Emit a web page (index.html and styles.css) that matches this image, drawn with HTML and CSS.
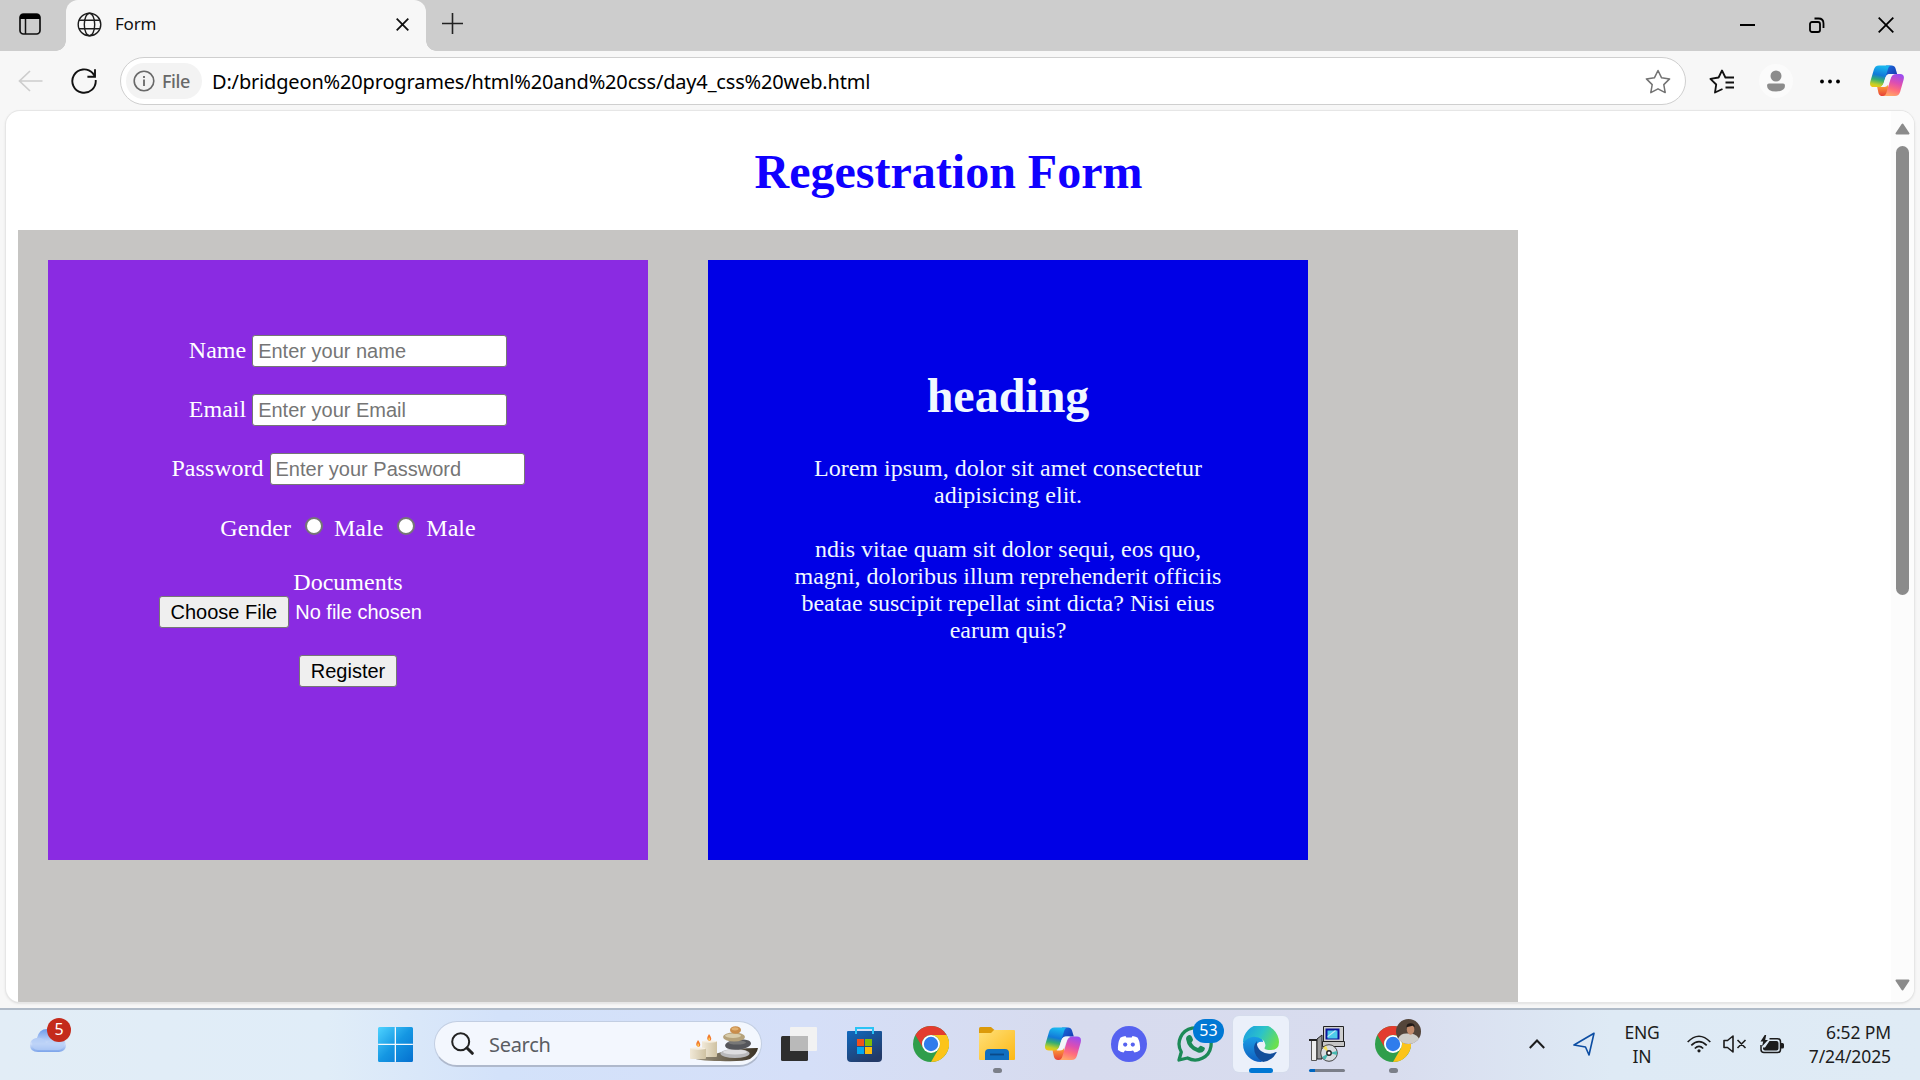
FILE: index.html
```html
<!DOCTYPE html>
<html lang="en">
<head>
<meta charset="utf-8">
<title>Form</title>
<link rel="stylesheet" href="styles.css">
</head>
<body>
<svg class="defs" width="0" height="0" aria-hidden="true">
  <defs>
    <linearGradient id="cpA" x1="0.3" y1="0" x2="0.1" y2="1"><stop offset="0" stop-color="#19b5ee"/><stop offset=".4" stop-color="#1279d8"/><stop offset=".62" stop-color="#35ad72"/><stop offset=".85" stop-color="#c3cf26"/><stop offset="1" stop-color="#f8c510"/></linearGradient>
    <linearGradient id="cpB" x1=".7" y1="0" x2=".4" y2="1"><stop offset="0" stop-color="#9b4df0"/><stop offset=".4" stop-color="#dd4eb2"/><stop offset=".7" stop-color="#ff6d7c"/><stop offset="1" stop-color="#ffa66a"/></linearGradient>
    <linearGradient id="cpC" x1="0" y1="0" x2="1" y2="1"><stop offset="0" stop-color="#1d6fe4"/><stop offset="1" stop-color="#1434a6"/></linearGradient>
    <linearGradient id="cpD" x1="0" y1="0" x2="0" y2="1"><stop offset="0" stop-color="#ffae35"/><stop offset="1" stop-color="#e8403a"/></linearGradient>
    <symbol id="copilot" viewBox="0 0 36 34">
      <path fill="url(#cpC)" d="M17 .5h6q3 0 4 3l1.800 6H22q-4 0-6 4z"/>
      <path fill="url(#cpD)" d="M19 33h-6q-3 0-4-3l-1.500-7H13q5 0 6-3z"/>
      <path fill="url(#cpA)" d="M9.500.5H23q-3 0-4 4l-4.500 14.500q-1.300 4.500-6 4.500H4q-5.200 0-3.700-6L4 5Q5.200.5 9.500.5z"/>
      <path fill="url(#cpB)" d="M26.500 33H13.500q3 0 4-4L22 14q1.300-4.500 6-4.500h4q5 0 3.700 6L32 28.500q-1.200 4.500-5.500 4.500z"/>
      <path fill="#f4f4fa" d="M20.500 9.500H25q-2.300 1-3.200 4l-2.300 6.500q-1.300 3.500-4.500 3.500h-3.500q2.300-1.500 3-4l2-6.500q1.200-3.500 4-3.500z"/>
    </symbol>
    <symbol id="chrome" viewBox="0 0 36 36">
      <circle cx="18" cy="18" r="18" fill="#2f9e4b"/>
      <path fill="#e33b2e" d="M2.400 9A18 18 0 0 1 33.600 9H18a9 9 0 0 0-7.800 13.500z"/>
      <path fill="#fcc419" d="M33.600 9A18 18 0 0 1 18 36l7.800-13.500A9 9 0 0 0 18 9z"/>
      <circle cx="18" cy="18" r="9" fill="#fff"/><circle cx="18" cy="18" r="7.200" fill="#2f7cec"/>
    </symbol>
    <linearGradient id="win" x1="0" y1="0" x2="1" y2="1"><stop offset="0" stop-color="#4ed3ff"/><stop offset=".5" stop-color="#1597e3"/><stop offset="1" stop-color="#0570cf"/></linearGradient>
    <linearGradient id="cloud" x1="0" y1="0" x2="0" y2="1"><stop offset="0" stop-color="#6d9bea"/><stop offset=".65" stop-color="#cfdffa"/><stop offset="1" stop-color="#7ba3ea"/></linearGradient>
    <linearGradient id="bag" x1="0" y1="0" x2=".6" y2="1"><stop offset="0" stop-color="#1069bf"/><stop offset="1" stop-color="#233a68"/></linearGradient>
    <linearGradient id="fold" x1="0" y1="0" x2="1" y2="1"><stop offset="0" stop-color="#ffe07a"/><stop offset="1" stop-color="#fdb813"/></linearGradient>
    <linearGradient id="edA" x1="0" y1=".2" x2="1" y2=".6"><stop offset="0" stop-color="#1b9de2"/><stop offset=".5" stop-color="#2cc3c8"/><stop offset="1" stop-color="#6be04e"/></linearGradient>
    <linearGradient id="edB" x1="0" y1="0" x2="0" y2="1"><stop offset="0" stop-color="#1b9fe6"/><stop offset="1" stop-color="#0f5fc0"/></linearGradient>
    <linearGradient id="wood" x1="0" y1="0" x2="1" y2="0"><stop offset="0" stop-color="#a79e88"/><stop offset="1" stop-color="#3a3123"/></linearGradient>
    <linearGradient id="wax" x1="0" y1="0" x2="1" y2="0"><stop offset="0" stop-color="#f1e9d8"/><stop offset="1" stop-color="#cfc2a2"/></linearGradient>
  </defs>
</svg>

<div class="window">
  <header class="tabstrip">
    <div class="tab-actions">
      <svg width="22" height="22" viewBox="0 0 22 22"><rect x="1" y="1" width="20" height="20" rx="3.5" fill="none" stroke="#111" stroke-width="1.7"/><path d="M1 6V4q0-3 3-3h14q3 0 3 3v2z"/><path d="M6.5 6v15" stroke="#111" stroke-width="1.5"/></svg>
    </div>
    <div class="tab">
      <svg width="25" height="25" viewBox="0 0 25 25" fill="none" stroke="#1c1c1c" stroke-width="1.4"><circle cx="12.5" cy="12.5" r="11.3"/><ellipse cx="12.5" cy="12.5" rx="5.2" ry="11.3"/><path d="M2 8.2h21M2 16.8h21"/></svg>
      <span class="tab-title">Form</span>
      <svg width="13" height="13" viewBox="0 0 13 13" stroke="#111" stroke-width="1.8"><path d="M.7.7l11.6 11.6M12.300.7L.7 12.300"/></svg>
    </div>
    <div class="new-tab"><svg width="21" height="21" viewBox="0 0 21 21" stroke="#222" stroke-width="1.6"><path d="M10.500 0v21M0 10.500h21"/></svg></div>
    <div class="caption">
      <span><svg width="15" height="16" viewBox="0 0 15 16"><path d="M0 8h15" stroke="#000" stroke-width="2"/></svg></span>
      <span><svg width="16" height="16" viewBox="0 0 16 16" fill="none" stroke="#000" stroke-width="1.800"><rect x="1" y="5" width="10" height="10" rx="2"/><path d="M5.500 1.500h4Q14.500 1.500 14.500 6.500v4.500"/></svg></span>
      <span><svg width="16" height="16" viewBox="0 0 16 16" stroke="#000" stroke-width="1.800"><path d="M.7.7l14.600 14.600M15.300.7L.7 15.300"/></svg></span>
    </div>
  </header>

  <nav class="toolbar">
    <span class="nav-btn"><svg width="25" height="22" viewBox="0 0 25 22" fill="none" stroke="#cdcdcd" stroke-width="1.700"><path d="M12 1L1.500 11 12 21M1.500 11H24.500"/></svg></span>
    <span class="nav-btn"><svg width="26" height="26" viewBox="0 0 26 26" fill="none" stroke="#111" stroke-width="1.900"><path d="M24.700 12A11.700 11.700 0 1 1 21.700 5.200L24 8.500"/><path d="M24 1.200v7.600h-7.600"/></svg></span>
    <div class="address">
      <span class="chip"><svg width="22" height="22" viewBox="0 0 22 22" fill="none" stroke="#686868" stroke-width="1.600"><circle cx="11" cy="11" r="9.800"/><path d="M11 9.500v6.500M11 6v2" stroke-width="1.800"/></svg><span class="chip-text">File</span></span>
      <span class="url">D:/bridgeon%20programes/html%20and%20css/day4_css%20web.html</span>
      <svg width="26" height="25" viewBox="0 0 26 25" fill="none" stroke="#737373" stroke-width="1.500" stroke-linejoin="round"><path d="M13 1.500l3.600 7.300 8 1.100-5.800 5.700 1.400 8L13 19.800l-7.200 3.800 1.400-8L1.400 9.900l8-1.100z"/></svg>
    </div>
    <div class="tools">
      <span><svg width="26" height="25" viewBox="0 0 26 25" fill="none" stroke="#111" stroke-width="1.800" stroke-linejoin="round"><path d="M13.500 20L6 23.500l1.200-8L1.400 9.800l8.200-1.300L13 1.500l3.400 7H25M16.500 13.500H25M16.500 18.500H25"/></svg></span>
      <span class="avatar"><svg width="34" height="34" viewBox="0 0 34 34"><circle cx="17" cy="17" r="17" fill="#fbfbfb"/><circle cx="17" cy="12" r="5.500" fill="#8c8c8c"/><path fill="#8c8c8c" d="M8 21.500q0-2 2-2h14q2 0 2 2 0 6-9 6t-9-6z"/></svg></span>
      <span><svg width="20" height="5" viewBox="0 0 20 5"><circle cx="2" cy="2.500" r="1.900"/><circle cx="10" cy="2.500" r="1.900"/><circle cx="18" cy="2.500" r="1.900"/></svg></span>
      <span class="last"><svg width="34" height="32"><use href="#copilot"/></svg></span>
    </div>
  </nav>

  <div class="viewport">
    <main class="page">
      <h1 class="title">Regestration Form</h1>
      <div class="container">
        <form class="card card-form">
          <label class="row"><span>Name</span><input class="field" type="text" placeholder="Enter your name"></label>
          <label class="row"><span>Email</span><input class="field" type="text" placeholder="Enter your Email"></label>
          <label class="row"><span>Password</span><input class="field" type="text" placeholder="Enter your Password"></label>
          <div class="row gender">Gender <input class="radio" type="radio" name="gender"> Male <input class="radio" type="radio" name="gender"> Male</div>
          <div class="documents">Documents
            <div class="file"><button class="btn" type="button">Choose File</button><span>No file chosen</span></div>
          </div>
          <button class="btn" type="button">Register</button>
        </form>
        <section class="card card-text">
          <h1 class="heading">heading</h1>
          <p class="para">Lorem ipsum, dolor sit amet consectetur adipisicing elit.<br><br>ndis vitae quam sit dolor sequi, eos quo, magni, doloribus illum reprehenderit officiis beatae suscipit repellat sint dicta? Nisi eius earum quis?</p>
        </section>
      </div>
    </main>
    <div class="scrollbar">
      <svg width="15" height="12" viewBox="0 0 15 12"><path fill="#8b8b8b" stroke="#8b8b8b" stroke-width="2" stroke-linejoin="round" d="M7.500 1.500L13.500 10.500h-12z"/></svg>
      <div class="thumb"></div>
      <svg width="15" height="12" viewBox="0 0 15 12"><path fill="#8b8b8b" stroke="#8b8b8b" stroke-width="2" stroke-linejoin="round" d="M7.500 10.500L13.500 1.500h-12z"/></svg>
    </div>
  </div>
</div>

<footer class="taskbar">
  <div class="weather">
    <svg width="36" height="24" viewBox="0 0 36 24"><path fill="url(#cloud)" d="M8 23q-8 0-8-7 0-6 7-7Q9 0 17 0q8 0 11 9 8 1 8 7t-7 7z"/><path fill="#b7cef6" opacity=".7" d="M2 13q3-5 9-4 4 1 5 5 8-5 19-1-1 8-7 8H8q-6 0-6-8z"/></svg>
    <span class="badge badge-red">5</span>
  </div>
  <div class="apps">
    <span class="app"><svg width="35" height="35" viewBox="0 0 35 35" fill="url(#win)"><path fill="#fff" opacity=".7" d="M16 1h3v33h-3zM1 16h33v3H1z"/><path d="M1.500 0H16.700V16.700H0V1.500Q0 0 1.500 0zM18 0H33.500Q35 0 35 1.500V16.700H18zM0 18H16.700V35H1.500Q0 35 0 33.500zM18 18H35V33.500Q35 35 33.500 35H18z"/></svg></span>
    <div class="search">
      <svg width="23" height="23" viewBox="0 0 23 23" fill="none" stroke="#222"><circle cx="9.700" cy="9.700" r="8.500" stroke-width="2"/><path d="M16 16l5.300 5.300" stroke-width="3" stroke-linecap="round"/></svg>
      <span class="search-text">Search</span>
      <svg class="candles" width="69" height="36" viewBox="0 0 69 36">
        <path fill="url(#wood)" d="M1 31Q20 30 32 26t36-4q-1 6-8 11-8 3-30 2-24 0-29-4z"/>
        <rect x="12" y="15" width="15" height="16" rx="1" fill="url(#wax)"/><rect x="0" y="22" width="16" height="11" rx="1" fill="url(#wax)"/>
        <ellipse cx="19.500" cy="15.500" rx="7.500" ry="1.200" fill="#f6eee0"/><ellipse cx="8" cy="22.500" rx="8" ry="1.200" fill="#f6eee0"/>
        <path fill="#f27a2c" d="M19 8q4 5 1 7-5-1-1-7zM8 14q4 5 1 7-5-1-1-7z"/><path fill="#ffd25c" d="M19 11q2 2 .5 4-2-1-.5-4zM8 17q2 2 .5 4-2-1-.5-4z"/>
        <ellipse cx="45" cy="27.500" rx="14.500" ry="4.500" fill="#b9b9bb"/><ellipse cx="45" cy="26" rx="12" ry="2.500" fill="#dddddf"/>
        <ellipse cx="48" cy="18.500" rx="13" ry="5.200" fill="#55565b" transform="rotate(-6 48 18)"/><ellipse cx="47" cy="16.500" rx="9" ry="2" fill="#777"/>
        <ellipse cx="44" cy="11" rx="11" ry="4.500" fill="#b5a27b"/><ellipse cx="43" cy="9.800" rx="8" ry="2.200" fill="#d8ccab"/>
        <ellipse cx="45.500" cy="4" rx="5.500" ry="3.800" fill="#c98d4b"/><ellipse cx="45" cy="2.800" rx="3.500" ry="1.600" fill="#e2b070"/>
      </svg>
    </div>
    <span class="app"><svg width="36" height="34" viewBox="0 0 36 34"><rect x="0" y="9" width="27" height="25" rx="1.500" fill="#2e2e2e"/><rect x="9" y="0" width="27" height="24" rx="1" fill="#f2f2f2"/><path fill="#b9b9b9" d="M9 9h18v15H9z"/></svg></span>
    <span class="app"><svg width="36" height="36" viewBox="0 0 36 36"><path fill="url(#bag)" d="M0 6q0-1 1-1h33q1 0 1 1v26q0 4-4 4H4q-4 0-4-4z"/><path fill="none" stroke="#2ac3f5" stroke-width="2" d="M9 8V2h17v6"/><path fill="#f1511b" d="M10 13h7v7h-7z"/><path fill="#80bc06" d="M18 13h7v7h-7z"/><path fill="#05a6f0" d="M10 21h7v7h-7z"/><path fill="#fcb90d" d="M18 21h7v7h-7z"/></svg></span>
    <span class="app"><svg width="36" height="36"><use href="#chrome"/></svg></span>
    <span class="app running"><svg width="36" height="34" viewBox="0 0 36 34"><path fill="#dc9a0a" d="M0 1.500Q0 0 1.500 0H12l4 3.500h0L12 7H0z"/><path fill="url(#fold)" d="M0 6h12l3-3h20q1 0 1 1v28q0 1-1 1H1q-1 0-1-1z"/><path fill="#0f6fc0" d="M6 26q0-4 4-4h16q4 0 4 4v7H6z"/><path stroke="#0a4a88" stroke-width="1.800" d="M11 27.500h14"/></svg></span>
    <span class="app"><svg width="36" height="34"><use href="#copilot"/></svg></span>
    <span class="app"><svg width="36" height="36" viewBox="0 0 36 36"><circle cx="18" cy="18" r="18" fill="#5662f0"/><path fill="#fff" d="M14.500 10Q11 10.600 9.300 11.700 6.500 17 7 24q2.700 2 5.500 2.600l1.500-2.200q4 1.100 8 0l1.500 2.200Q26.500 26 29 24q.6-7-2.300-12.300Q25 10.600 21.500 10l-.8 1.600q-2.700-.4-5.400 0z"/><circle cx="14.200" cy="18.600" r="2.100" fill="#5662f0"/><circle cx="21.800" cy="18.600" r="2.100" fill="#5662f0"/></svg></span>
    <span class="app"><svg width="36" height="36" viewBox="0 0 36 36"><path fill="none" stroke="#1c8a57" stroke-width="3.300" stroke-linejoin="round" d="M2 34l2.300-8A16 16 0 1 1 10.500 32z"/><path fill="#1c8a57" d="M9 13q0-3 3-4 2-.5 3 2l1 2.500q.3 1-1.500 3 2 4 6.500 5.500l2-2q.6-.6 1.500 0l3 1.600q1 .6-.3 2.800Q25 27.500 21 26.500 10.500 23 9 13z"/></svg><span class="badge badge-blue">53</span></span>
    <span class="app active"><svg width="36" height="36" viewBox="0 0 36 36"><path fill="url(#edB)" d="M0 18Q2 9 12 10q8 1 8 6-6-1-7 5-.5 8 8 11-2 4-3 4A18 18 0 0 1 0 18z"/><path fill="url(#edA)" d="M0 17A18 18 0 0 1 36 16q0 8-8 8-7 0-6.500-2Q24 18 20 14 9 6 0 17z"/><path fill="#124d9b" d="M11 21q1-4 3-6-1 6 4 10 7 5 15 1 1-.3.600.6A18 18 0 0 1 20 36Q11 31 11 21z"/></svg></span>
    <span class="app progress"><svg width="36" height="36" viewBox="0 0 36 36">
      <path fill="#cfcfcf" stroke="#222" d="M14.500.5h20v15h-20z"/><path fill="#0b149c" d="M16.500 2.500h14v11h-14z"/><path fill="#4ecbea" d="M18.500 4.500h10v8h-10z"/><path fill="#bde9f6" d="M18.500 10l7-5.500h2l-9 7z"/>
      <path fill="#c6c6c6" stroke="#222" d="M13.500 15.500h22v5h-22z"/><path fill="#999" stroke="#222" d="M8 13l5-4v24H8z"/><path fill="#eee" stroke="#555" d="M2.500 14.500h5v20h-5z"/><path stroke="#222" stroke-width="2" d="M0 14h8"/>
      <circle cx="20" cy="27" r="8.300" fill="#d8dce0" stroke="#444"/><path fill="#f3e05c" d="M20 27l-6-5 3-2.500z"/><path fill="#49b8b0" d="M20 27l8-2v4zM20 27l-7 4 3 3z"/><circle cx="20" cy="27" r="2.200" fill="#fff" stroke="#222" stroke-width="1.400"/></svg></span>
    <span class="app running"><svg width="36" height="36"><use href="#chrome"/></svg><svg class="face" width="25" height="25" viewBox="0 0 24 24"><circle cx="12" cy="12" r="12" fill="#54453a"/><path fill="#cfcdc8" d="M2 19q2-5 8-5h5q6 2 7 5-4 5-10 5T2 19z"/><ellipse cx="14" cy="10" rx="3.600" ry="5" fill="#c28b6c"/><path fill="#211a17" d="M10 8q0-4 4-4t4 4l-2-1.500z"/></svg></span>
  </div>
  <div class="tray">
    <svg width="16" height="10" viewBox="0 0 16 10" fill="none" stroke="#1c1c1c" stroke-width="2"><path d="M.8 9L8 1.500 15.200 9"/></svg>
    <svg class="loc" width="22" height="24" viewBox="0 0 22 24" fill="none" stroke="#0c4da2" stroke-width="1.600" stroke-linejoin="round"><path d="M21 1.200L1 13l11.500 2L16 23z"/></svg>
    <div class="lang">ENG<br>IN</div>
    <svg class="wifi" width="24" height="18" viewBox="0 0 24 18" fill="none" stroke="#1c1c1c" stroke-width="1.700"><path d="M.7 7Q12-4.500 23.300 7M4.300 10.300q7.700-7.500 15.400 0M7.800 13.500q4.200-4.200 8.400 0"/><circle cx="12" cy="15.800" r="1.600" fill="#1c1c1c" stroke="none"/></svg>
    <svg class="spk" width="24" height="18" viewBox="0 0 24 18" fill="none" stroke="#1c1c1c" stroke-width="1.600" stroke-linejoin="round"><path d="M1 5.500h3.500L10 1v16l-5.500-4.500H1zM14.500 5l8 8M22.500 5l-8 8"/></svg>
    <svg class="bat" width="24" height="19" viewBox="0 0 24 19"><path fill="none" stroke="#1c1c1c" stroke-width="1.500" d="M9.500 3.800H17.500q3 0 3 3V14.500q0 3-3 3H4q-3 0-3-3V10"/><path fill="#1c1c1c" d="M21 8h1.500Q24 8 24 9.500v2.500q0 1.500-1.500 1.500H21zM3 12.500h2L9.500 6H16.500q2 0 2 2V13.500q0 2-2 2H5q-2 0-2-2z"/><path fill="#1c1c1c" d="M4.700 0L.5 6.500H3.200L2 11.500 8 5H5.200L6.200 0z"/></svg>
    <div class="clock">6:52 PM<br>7/24/2025</div>
  </div>
</footer>
</body>
</html>
```
FILE: styles.css
```css
* { box-sizing: border-box; }
html, body { height: 100%; }
body {
  margin: 0;
  display: flex;
  flex-direction: column;
  overflow: hidden;
  background: #f7f7f7;
  font-family: "Noto Sans", sans-serif;
  color: #111;
}
svg { display: block; flex: none; }
.defs { position: absolute; }

/* browser window */
.window { display: flex; flex-direction: column; height: 1008px; }
.tabstrip { display: flex; height: 51px; background: #cdcdcd; }
.tab-actions { width: 66px; padding: 13px 0 0 19px; }
.tab {
  position: relative;
  display: flex;
  align-items: center;
  width: 360px;
  height: 51px;
  padding: 0 17px 3px 11px;
  background: #f7f7f7;
  border-radius: 12px 12px 0 0;
}
.tab::before, .tab::after {
  content: "";
  position: absolute;
  bottom: 0;
  width: 10px;
  height: 10px;
}
.tab::before { left: -10px; background: radial-gradient(circle at 0 0, #cdcdcd 9.500px, #f7f7f7 10px); }
.tab::after { right: -10px; background: radial-gradient(circle at 100% 0, #cdcdcd 9.500px, #f7f7f7 10px); }
.tab-title { flex: 1; margin-left: 13px; font-size: 17px; line-height: 24px; letter-spacing: -.2px; }
.new-tab { padding: 13px 0 0 16px; }
.caption { display: flex; margin-left: auto; }
.caption span { display: flex; justify-content: center; width: 69px; padding-top: 17px; }

.toolbar { display: flex; align-items: center; height: 60px; padding: 0 3px 0 12px; }
.nav-btn { display: flex; justify-content: center; width: 36px; margin-right: 18px; }
.address {
  display: flex;
  align-items: center;
  width: 1566px;
  height: 48px;
  padding: 0 14px 0 5px;
  background: #fff;
  border: 1px solid #cfcfcf;
  border-radius: 24px;
}
.chip { display: flex; align-items: center; width: 76px; height: 36px; padding-left: 7px; background: #f3f3f3; border-radius: 18px; }
.chip-text { margin-left: 7px; font-size: 18px; font-weight: 500; color: #686868; letter-spacing: -.4px; }
.url { flex: 1; margin-left: 10px; padding-top: 1px; font-size: 20px; line-height: 28px; color: #000; letter-spacing: -.17px; white-space: nowrap; }
.tools { display: flex; margin-left: 9px; }
.tools span { display: flex; align-items: center; justify-content: center; width: 54px; height: 36px; }
.tools .last { width: 60px; }

.viewport {
  display: flex;
  height: 891px;
  margin: 0 6px;
  background: #fff;
  border-radius: 14px;
  box-shadow: 0 0 0 1px #e6e6e6, 0 1px 3px #ccc;
  overflow: hidden;
}

/* web page */
.page { width: 1885px; padding: 33px 12px 0; font: 24px/27px "Liberation Serif", serif; }
.title { margin: 0 0 31px; font-size: 48px; line-height: 55px; text-align: center; color: #1000ff; }
.container { display: flex; gap: 60px; width: 1500px; height: 780px; padding: 30px; background: #c6c5c3; }
.card { width: 600px; height: 600px; padding: 75px; text-align: center; color: #f0f8ff; }
.card-form { display: flex; flex-direction: column; align-items: center; gap: 27px; background: #8a2be2; color: #fff; }
.row { display: flex; align-items: center; gap: 6px; height: 32px; }
.row span { padding-bottom: 2px; }
.field {
  width: 255px;
  height: 32px;
  padding: 0 0 0 5px;
  border: 1px solid #767676;
  border-radius: 3px;
  background: #fff;
  font: 20px/24px "Liberation Sans", sans-serif;
}
.field::placeholder { color: #757575; }
.gender { height: 30px; gap: 0; padding-top: 2px; }
.radio {
  appearance: none;
  width: 18px;
  height: 18px;
  margin: -5px 11px 0 14px;
  border: 2px solid #767676;
  border-radius: 50%;
  background: #fff;
}
.documents { width: 379px; }
.file { display: flex; align-items: center; gap: 6px; height: 32px; font: 20px/24px "Liberation Sans", sans-serif; }
.btn {
  height: 32px;
  padding: 0 11px;
  border: 1px solid #767676;
  border-radius: 3px;
  background: #efefef;
  color: #000;
  font: 20px/24px "Liberation Sans", sans-serif;
}
.card-text { background: #0000e6; }
.heading { margin: 33px 0 32px; font-size: 48px; line-height: 55px; }
.para { margin: 0; }

.scrollbar { display: flex; flex-direction: column; align-items: center; width: 23px; padding: 12px 0 11px; background: #fcfcfc; }
.thumb { width: 13px; height: 449px; margin: 11px 0 auto; border-radius: 7px; background: #8b8b8b; }

/* taskbar */
.taskbar {
  display: flex;
  height: 72px;
  border-top: 2px solid #b0bbc8;
  background: linear-gradient(90deg, #e2edf6 0, #e0edf8 17%, #d3e2fa 26%, #d5dff8 42%, #d7dbee 56%, #d8dcee 72%, #deeaf5 84%, #dfebf5 100%);
}
.weather { position: relative; width: 367px; padding: 19px 0 0 30px; }
.badge { position: absolute; height: 24px; border-radius: 12px; color: #fff; font-size: 16px; line-height: 23px; text-align: center; }
.badge-red { left: 47px; top: 8px; width: 24px; background: #c42b1c; }
.badge-blue { left: 26px; top: 3px; width: 31px; background: #0078d4; }
.apps { display: flex; gap: 10px; padding-top: 6px; }
.app { position: relative; display: flex; align-items: center; justify-content: center; width: 56px; height: 56px; border-radius: 6px; }
.active { background: #ebf0fa; box-shadow: 0 0 0 1px #d5dcec; }
.running::after, .active::after, .progress::after { content: ""; position: absolute; bottom: -1px; left: 24px; width: 9px; height: 5px; border-radius: 3px; background: #7b7f89; }
.active::after { left: 16px; width: 24px; background: #0078d4; }
.progress::after { left: 10px; bottom: 0; width: 36px; height: 3px; background: linear-gradient(90deg, #0067c0 6px, #7b7f89 6px); }
.face { position: absolute; left: 31px; top: 3px; }
.search {
  display: flex;
  align-items: center;
  width: 328px;
  height: 46px;
  margin: 5px -1px 0 1px;
  padding: 0 2px 0 16px;
  border: 1px solid #c2cee2;
  border-bottom: 2px solid #afb9cc;
  border-radius: 23px;
  background: #f3f7fe;
}
.search-text { flex: 1; margin-left: 15px; padding-top: 2px; font-size: 20px; line-height: 26px; letter-spacing: -.3px; color: #5a5d63; }
.tray { display: flex; align-items: center; flex: 1; margin-left: 108px; padding: 0 29px 2px 0; font-size: 17.500px; line-height: 24px; letter-spacing: -.1px; color: #1c1c1c; }
.loc { margin-left: 28px; }
.lang { width: 36px; margin-left: 29px; text-align: center; letter-spacing: -.2px; }
.wifi { margin-left: 27px; }
.spk { margin-left: 12px; }
.bat { margin-left: 13px; }
.clock { margin-left: auto; text-align: right; white-space: nowrap; }
```
